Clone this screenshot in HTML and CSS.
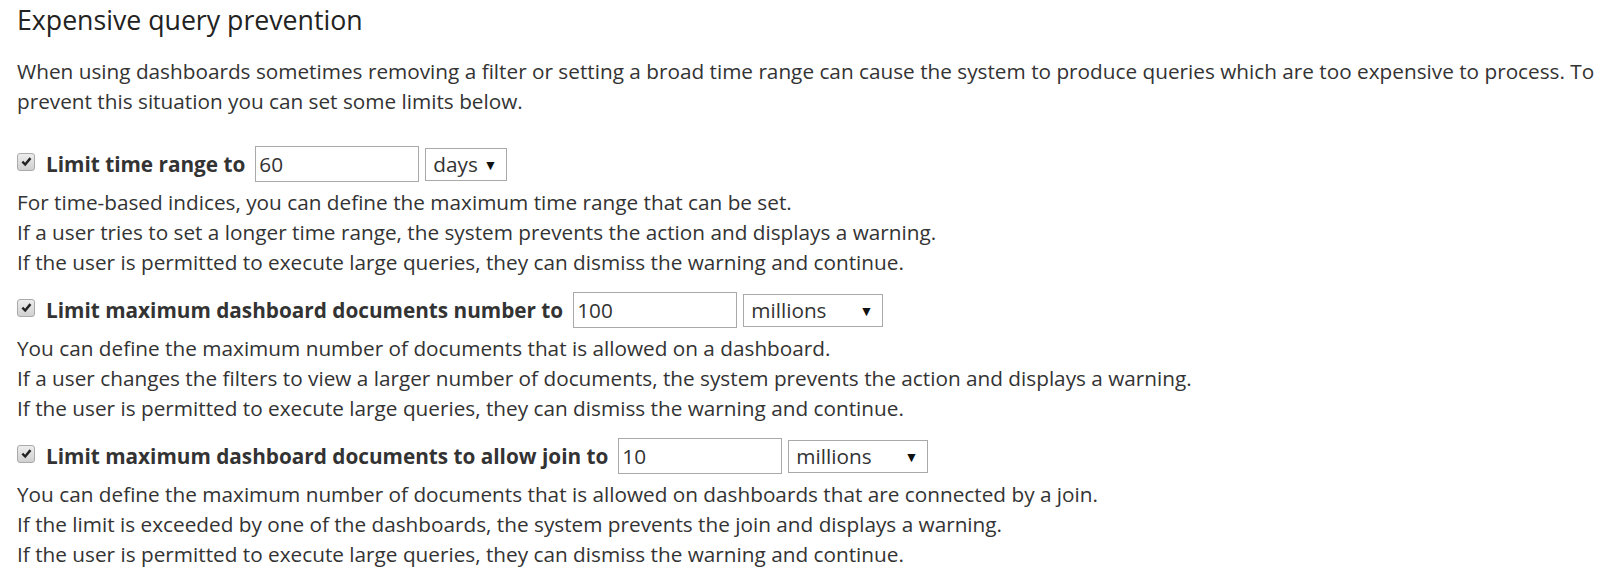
FILE: index.html
```html
<!DOCTYPE html>
<html lang="en">
<head>
    <meta charset="UTF-8">
    <title>Expensive query prevention</title>
    <link rel="stylesheet" href="styles.css">
</head>
<body>

    <div class="page">
        <h2 class="title">Expensive query prevention</h2>
        <p class="intro">When using dashboards sometimes removing a filter or setting a broad time range can cause the system to produce queries which are too expensive to process. To prevent this situation you can set some limits below.</p>

        <!-- time range -->
        <div class="limit">
            <div class="limit-row">
                <span class="check"><svg width="16" height="16" viewBox="0 0 16 16"><path d="M3.6 8.2 L6.6 11.2 L12.2 4.4" /></svg></span>
                <label class="limit-label">Limit time range to</label>
                <input class="limit-value" type="text" value="60">
                <span class="select-wrap">
                    <select class="unit unit-days">
                        <option>days</option>
                        <option>weeks</option>
                        <option>months</option>
                    </select>
                </span>
            </div>
            <div class="limit-help">
                For time-based indices, you can define the maximum time range that can be set.<br>
                If a user tries to set a longer time range, the system prevents the action and displays a warning.<br>
                If the user is permitted to execute large queries, they can dismiss the warning and continue.
            </div>
        </div>

        <!-- documents number -->
        <div class="limit">
            <div class="limit-row">
                <span class="check"><svg width="16" height="16" viewBox="0 0 16 16"><path d="M3.6 8.2 L6.6 11.2 L12.2 4.4" /></svg></span>
                <label class="limit-label">Limit maximum dashboard documents number to</label>
                <input class="limit-value" type="text" value="100">
                <span class="select-wrap">
                    <select class="unit">
                        <option>millions</option>
                        <option>thousands</option>
                    </select>
                </span>
            </div>
            <div class="limit-help">
                You can define the maximum number of documents that is allowed on a dashboard.<br>
                If a user changes the filters to view a larger number of documents, the system prevents the action and displays a warning.<br>
                If the user is permitted to execute large queries, they can dismiss the warning and continue.
            </div>
        </div>

        <!-- join -->
        <div class="limit">
            <div class="limit-row">
                <span class="check"><svg width="16" height="16" viewBox="0 0 16 16"><path d="M3.6 8.2 L6.6 11.2 L12.2 4.4" /></svg></span>
                <label class="limit-label">Limit maximum dashboard documents to allow join to</label>
                <input class="limit-value" type="text" value="10">
                <span class="select-wrap">
                    <select class="unit">
                        <option>millions</option>
                        <option>thousands</option>
                    </select>
                </span>
            </div>
            <div class="limit-help">
                You can define the maximum number of documents that is allowed on dashboards that are connected by a join.<br>
                If the limit is exceeded by one of the dashboards, the system prevents the join and displays a warning.<br>
                If the user is permitted to execute large queries, they can dismiss the warning and continue.
            </div>
        </div>
    </div>

</body>
</html>
```

FILE: styles.css
```css
body {
    margin: 0;
    font-family: 'Open Sans', 'Liberation Sans', sans-serif;
    color: #333;
    background: white;
}

.page {
    padding: 2px 16px 0 17px;
}

.title {
    margin: 0;
    font-size: 26.7px;
    line-height: 36px;
    font-weight: normal;
    color: #222;
}

.intro {
    margin: 18px 0 30px;
    font-size: 20.75px;
    line-height: 30px;
}

.limit {
    margin-bottom: 15px;
}

.limit-row {
    display: flex;
    align-items: center;
    height: 36px;
}

.check {
    width: 16px;
    height: 16px;
    margin-top: -5px;
    margin-right: 11px;
    border: 1px solid #aaa;
    border-radius: 3px;
    background: linear-gradient(#ededed, #d0d0d0);
    display: flex;
    align-items: center;
    justify-content: center;
}

.check svg {
    width: 15px;
    height: 15px;
}

.check path {
    fill: none;
    stroke: #222;
    stroke-width: 2.6;
}

.limit-label {
    font-size: 20.75px;
    font-weight: bold;
    margin-right: 10px;
}

.limit-value {
    width: 164px;
    height: 36px;
    box-sizing: border-box;
    border: 1px solid #a9a9a9;
    padding: 0 3px;
    font-family: inherit;
    font-size: 20.75px;
    color: #333;
    outline: none;
}

.select-wrap {
    position: relative;
    margin-left: 6px;
}

.select-wrap::after {
    content: "\25BC";
    position: absolute;
    right: 10px;
    top: 7px;
    font-size: 14px;
    color: #111;
    pointer-events: none;
}

.unit {
    -webkit-appearance: none;
    appearance: none;
    width: 140px;
    height: 33px;
    border: 1px solid #a9a9a9;
    border-radius: 0;
    background: white;
    padding: 0 0 0 7px;
    font-family: inherit;
    font-size: 20.75px;
    color: #333;
    display: block;
}

.unit-days {
    width: 82px;
}

.limit-help {
    margin-top: 5px;
    font-size: 20.75px;
    line-height: 30px;
}
```
